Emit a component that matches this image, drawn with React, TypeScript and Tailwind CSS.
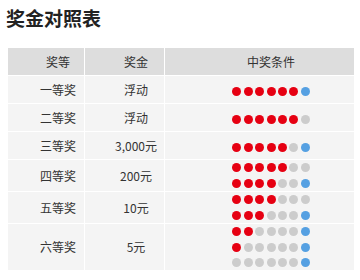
import * as React from "react";

type Dot = "r" | "g" | "b";

const rows: { level: string; prize: string; lines: string[]; h: string; gap: string }[] = [
  { level: "一等奖", prize: "浮动", lines: ["rrrrrrb"], h: "h-[27px]", gap: "gap-0" },
  { level: "二等奖", prize: "浮动", lines: ["rrrrrrg"], h: "h-[27px]", gap: "gap-0" },
  { level: "三等奖", prize: "3,000元", lines: ["rrrrrgb"], h: "h-[27px]", gap: "gap-0" },
  { level: "四等奖", prize: "200元", lines: ["rrrrrgg", "rrrrggb"], h: "h-[31px]", gap: "gap-[6.5px]" },
  { level: "五等奖", prize: "10元", lines: ["rrrrggg", "rrrgggb"], h: "h-[31px]", gap: "gap-[6.5px]" },
  { level: "六等奖", prize: "5元", lines: ["rrggggb", "rgggggb", "ggggggb"], h: "h-[46px]", gap: "gap-[6.3px]" },
];

const dotColor: Record<Dot, string> = {
  r: "bg-[#e60012]",
  g: "bg-[#cccccc]",
  b: "bg-[#55a0e2]",
};

function DotLine({ line }: { line: string }) {
  return (
    <div className="flex gap-[2.35px]">
      {line.split("").map((c, i) => (
        <span key={i} className={`block w-[9px] h-[9px] rounded-full ${dotColor[c as Dot]}`} />
      ))}
    </div>
  );
}

export default function App() {
  return (
    <div
      className="w-[360px] h-[280px] bg-white overflow-hidden"
      style={{ fontFamily: '"Noto Sans CJK SC", "Noto Sans", sans-serif' }}
    >
      <h1 className="pl-[6px] pt-[7px] text-[19px] leading-[22px] font-bold text-[#222]">
        奖金对照表
      </h1>

      <div className="ml-[8px] mt-[19px] w-[346px] grid grid-cols-[76px_79px_189px] gap-px bg-white text-[12px] text-[#333]">
        <div className="h-[27px] bg-[#dddddd] pl-[24px] flex items-center justify-center">奖等</div>
        <div className="h-[27px] bg-[#dddddd] pl-[23px] flex items-center justify-center">奖金</div>
        <div className="h-[27px] bg-[#dddddd] pl-[23px] flex items-center justify-center">中奖条件</div>

        {rows.map((r) => (
          <React.Fragment key={r.level}>
            <div className={`${r.h} bg-[#f4f4f4] pl-[24px] flex items-center justify-center`}>{r.level}</div>
            <div className={`${r.h} bg-[#f4f4f4] pl-[23px] flex items-center justify-center`}>{r.prize}</div>
            <div
              className={`${r.h} bg-[#f4f4f4] pl-[23px] flex flex-col items-center justify-center ${r.gap} ${
                r.lines.length === 1 ? "pt-[4px]" : ""
              }`}
            >
              {r.lines.map((l, i) => (
                <DotLine key={i} line={l} />
              ))}
            </div>
          </React.Fragment>
        ))}
      </div>
    </div>
  );
}
